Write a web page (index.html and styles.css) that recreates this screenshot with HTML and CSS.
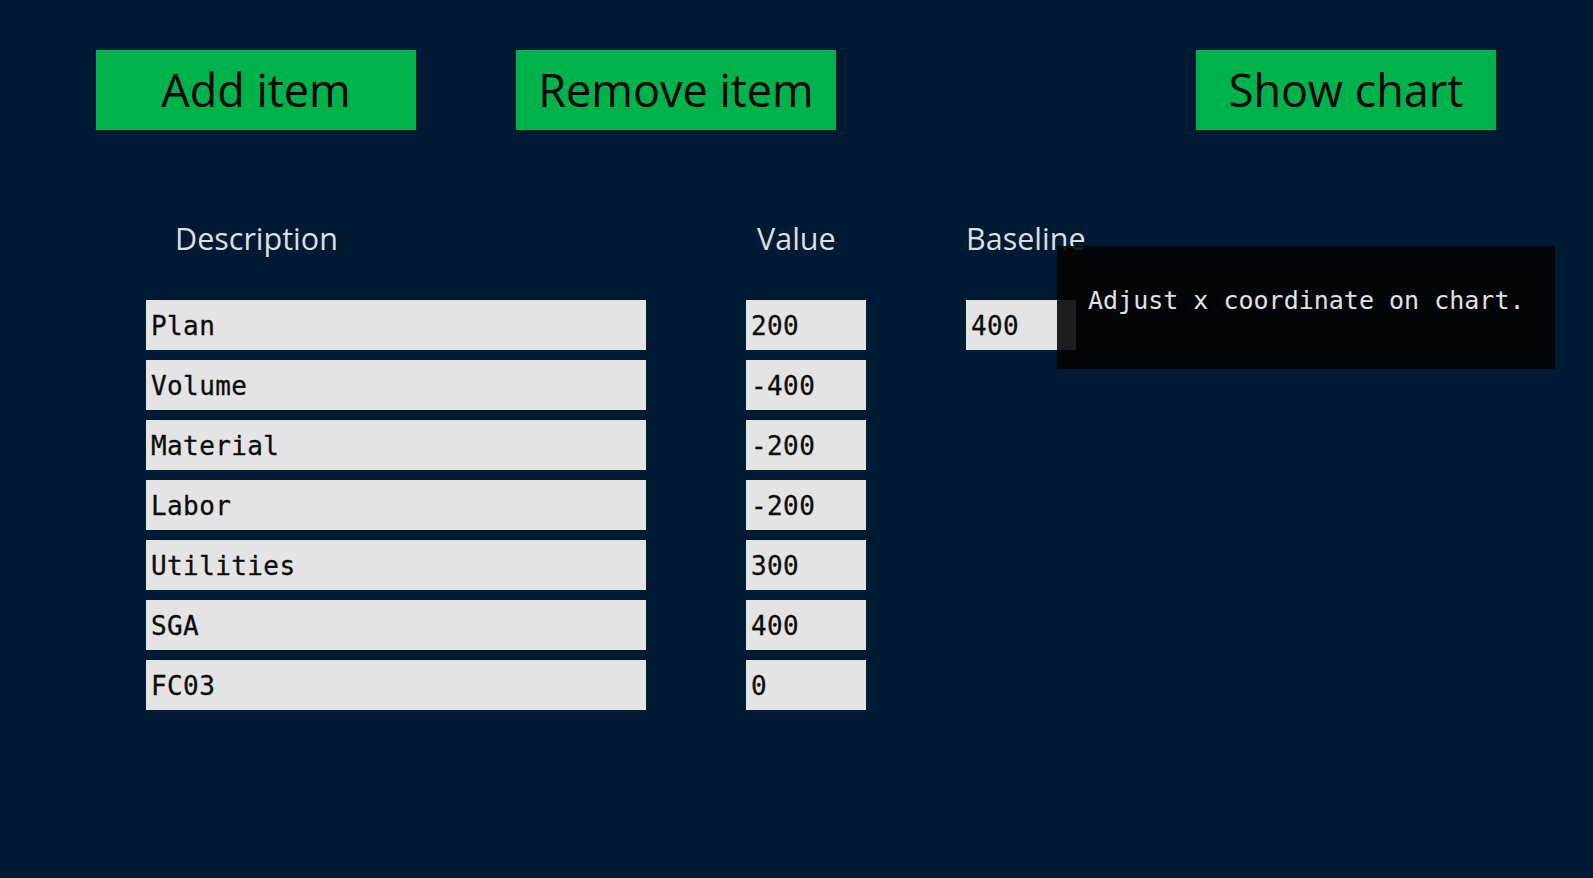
FILE: index.html
```html
<!DOCTYPE html>
<html lang="en">
<head>
<meta charset="utf-8">
<title>Items</title>
<link rel="stylesheet" href="styles.css">
</head>
<body>
<div class="app">
  <div class="toolbar">
    <button class="btn">Add item</button>
    <button class="btn">Remove item</button>
    <button class="btn btn-chart">Show chart</button>
  </div>
  <div class="table">
    <div class="head head-desc">Description</div>
    <div class="head head-value">Value</div>
    <div class="head head-base">Baseline</div>

    <input class="cell" type="text" value="Plan">
    <input class="cell" type="text" value="200">
    <input class="cell" type="text" value="400">

    <input class="cell" type="text" value="Volume">
    <input class="cell" type="text" value="-400">
    <div class="empty"></div>

    <input class="cell" type="text" value="Material">
    <input class="cell" type="text" value="-200">
    <div class="empty"></div>

    <input class="cell" type="text" value="Labor">
    <input class="cell" type="text" value="-200">
    <div class="empty"></div>

    <input class="cell" type="text" value="Utilities">
    <input class="cell" type="text" value="300">
    <div class="empty"></div>

    <input class="cell" type="text" value="SGA">
    <input class="cell" type="text" value="400">
    <div class="empty"></div>

    <input class="cell" type="text" value="FC03">
    <input class="cell" type="text" value="0">
    <div class="empty"></div>
  </div>
  <div class="tooltip">Adjust x coordinate on chart.</div>
</div>
</body>
</html>
```
FILE: styles.css
```css
html, body {
  margin: 0;
  padding: 0;
  background: #011a33;
  height: 100%;
}

.app {
  position: relative;
  min-height: 878px;
  background: #011a33;
  font-family: "Open Sans", "Noto Sans", sans-serif;
}

.toolbar {
  display: flex;
  align-items: flex-start;
  gap: 100px;
  padding: 50px 0 0 96px;
}

.btn {
  width: 320px;
  height: 80px;
  margin: 0;
  padding: 0;
  border: none;
  background: #00b24c;
  color: #050505;
  font-family: "Open Sans", "Noto Sans", sans-serif;
  font-size: 45px;
  line-height: 80px;
  text-align: center;
  cursor: pointer;
}

.btn-chart {
  width: 300px;
  margin-left: 260px;
}

.table {
  display: grid;
  grid-template-columns: 500px 120px 110px;
  column-gap: 100px;
  row-gap: 10px;
  padding-left: 146px;
  margin-top: 88px;
}

.head {
  height: 40px;
  line-height: 40px;
  padding-bottom: 32px;
  font-size: 30.5px;
  color: #dcdfe3;
  white-space: nowrap;
}

.head-desc { padding-left: 29px; }
.head-value { padding-left: 11px; }
.head-base { padding-left: 0; }

.cell {
  box-sizing: border-box;
  width: 100%;
  height: 50px;
  margin: 0;
  padding: 1px 5px 0 5px;
  border: none;
  outline: none;
  background: #e4e4e4;
  color: #0c0c0c;
  font-family: "DejaVu Sans Mono", "Liberation Mono", monospace;
  font-size: 26px;
  letter-spacing: 0.4px;
  -webkit-text-stroke: 0.3px #0c0c0c;
}

.empty {
  height: 50px;
}

.tooltip {
  position: absolute;
  left: 1057px;
  top: 246px;
  width: 498px;
  height: 123px;
  box-sizing: border-box;
  padding: 40px 0 0 31px;
  background: rgba(2, 3, 4, 0.885);
  color: #e2e2e2;
  font-family: "DejaVu Sans Mono", "Liberation Mono", monospace;
  font-size: 25px;
  line-height: 30px;
  white-space: nowrap;
}
```
